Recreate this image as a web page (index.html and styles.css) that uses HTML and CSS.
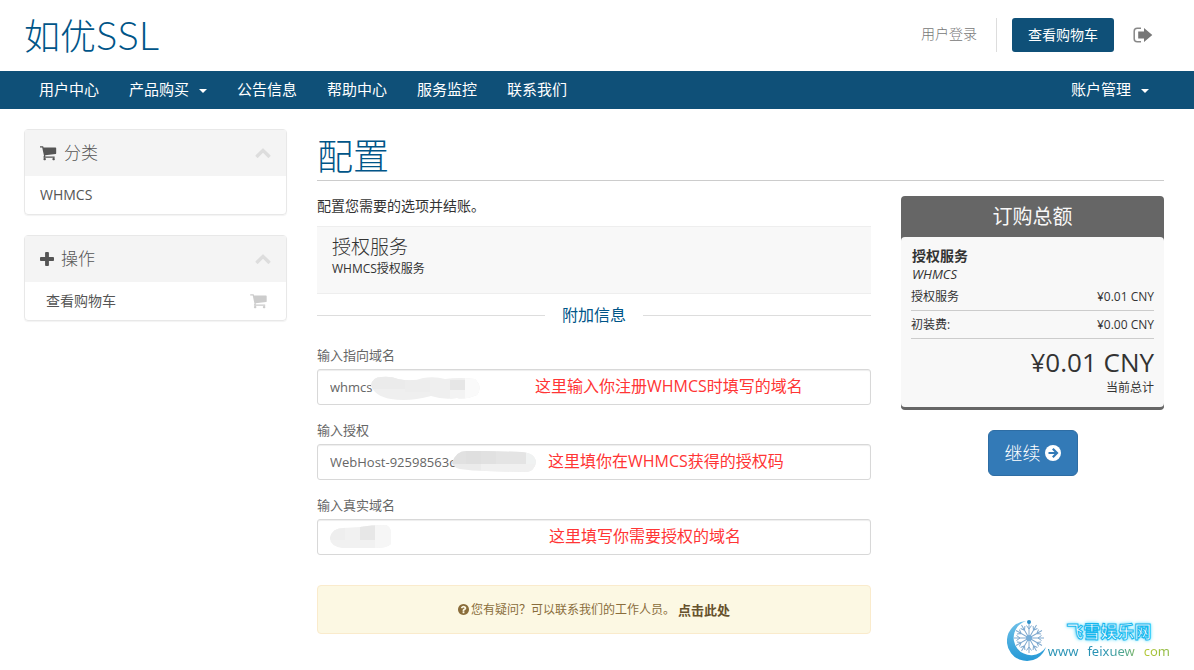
FILE: index.html
```html
<!DOCTYPE html>
<html lang="zh-CN">
<head>
<meta charset="utf-8">
<meta name="viewport" content="width=device-width, initial-scale=1">
<title>配置 - 如优SSL</title>
<link rel="stylesheet" href="styles.css">
</head>
<body>
<svg class="sprite" aria-hidden="true">
  <symbol id="cart" viewBox="64 128 1664 1600"><path d="M640 1536q0 52-38 90t-90 38-90-38-38-90 38-90 90-38 90 38 38 90zm896 0q0 52-38 90t-90 38-90-38-38-90 38-90 90-38 90 38 38 90zm128-1088v512q0 24-16.500 42.500t-40.500 21.500l-1044 122q13 60 13 70 0 16-24 64h920q26 0 45 19t19 45-19 45-45 19h-1024q-26 0-45-19t-19-45q0-11 8-31.500t16-36 21.500-40 15.500-29.500l-177-823h-204q-26 0-45-19t-19-45 19-45 45-19h256q16 0 28.500 6.500t19.500 15.500 13 24.500 8 26 5.500 29.500 4.500 26h1201q26 0 45 19t19 45z"/></symbol>
  <symbol id="plus" viewBox="192 128 1408 1408"><path d="M1600 736v192q0 40-28 68t-68 28h-416v416q0 40-28 68t-68 28h-192q-40 0-68-28t-28-68v-416h-416q-40 0-68-28t-28-68v-192q0-40 28-68t68-28h416v-416q0-40 28-68t68-28h192q40 0 68 28t28 68v416h416q40 0 68 28t28 68z"/></symbol>
  <symbol id="chevron" viewBox="64 352 1664 1280"><path d="M1683 1331l-166 165q-19 19-45 19t-45-19l-531-531-531 531q-19 19-45 19t-45-19l-166-165q-19-19-19-45.500t19-45.500l742-741q19-19 45-19t45 19l742 741q19 19 19 45.500t-19 45.500z"/></symbol>
  <symbol id="question" viewBox="128 128 1536 1536"><path d="M1024 1376v-192q0-14-9-23t-23-9h-192q-14 0-23 9t-9 23v192q0 14 9 23t23 9h192q14 0 23-9t9-23zm256-672q0-88-55.500-163t-138.500-116-170-41q-243 0-371 213-15 24 8 42l132 100q7 6 19 6 16 0 25-12 53-68 86-92 34-24 86-24 48 0 85.500 26t37.500 59q0 38-20 61t-68 45q-63 28-115.500 86.500t-52.500 125.500v36q0 14 9 23t23 9h192q14 0 23-9t9-23q0-19 21.500-49.500t54.500-49.500q32-18 49-28.500t46-35 44.500-48 28-60.500 12.500-81zm384 192q0 209-103 385.500t-279.500 279.500-385.500 103-385.500-103-279.500-279.500-103-385.500 103-385.500 279.500-279.500 385.500-103 385.500 103 279.500 279.500 103 385.500z"/></symbol>
</svg>

<header class="header container">
  <a class="logo" href="#">如优<span class="logo-latin">SSL</span></a>
  <div class="header-tools">
    <a class="login" href="#">用户登录</a>
    <a class="btn-cart" href="#">查看购物车</a>
    <button class="btn-logout" type="button" aria-label="退出">
      <svg width="20" height="16" viewBox="0 0 20 16"><path d="M8 1.200H4.200Q1.200 1.200 1.200 4.200V11.800Q1.200 14.800 4.200 14.800H8" fill="none" stroke="#888" stroke-width="1.500"/><path d="M5.200 4.500H11V1L19.300 8 11 15V11.500H5.200Z" fill="#777"/></svg>
    </button>
  </div>
</header>

<nav class="navbar">
  <div class="container nav-row">
    <ul class="nav">
      <li><a href="#">用户中心</a></li>
      <li><a href="#">产品购买<span class="caret"></span></a></li>
      <li><a href="#">公告信息</a></li>
      <li><a href="#">帮助中心</a></li>
      <li><a href="#">服务监控</a></li>
      <li><a href="#">联系我们</a></li>
    </ul>
    <ul class="nav">
      <li><a href="#">账户管理<span class="caret"></span></a></li>
    </ul>
  </div>
</nav>

<div class="container page">
  <aside class="sidebar">
    <section class="panel">
      <h3 class="panel-head"><svg class="icon" width="17" height="16"><use href="#cart"/></svg><span>分类</span><svg class="chev" width="16" height="12"><use href="#chevron"/></svg></h3>
      <a class="panel-item" href="#">WHMCS</a>
    </section>
    <section class="panel">
      <h3 class="panel-head"><svg class="icon" width="14" height="14"><use href="#plus"/></svg><span>操作</span><svg class="chev" width="16" height="12"><use href="#chevron"/></svg></h3>
      <a class="panel-item panel-item-icon" href="#"><span>查看购物车</span><svg class="item-cart" width="18" height="16"><use href="#cart"/></svg></a>
    </section>
  </aside>

  <main class="main">
    <h1 class="title">配置</h1>
    <form class="columns">
      <div class="config">
        <p class="lead">配置您需要的选项并结账。</p>
        <div class="product">
          <h2 class="product-name">授权服务</h2>
          <p class="product-desc">WHMCS授权服务</p>
        </div>
        <h2 class="divider"><span>附加信息</span></h2>

        <div class="field">
          <label for="f1">输入指向域名</label>
          <div class="control">
            <input id="f1" type="text" value="whmcs">
            <svg class="mosaic mosaic-a" width="110" height="24" viewBox="0 0 110 24">
              <defs><clipPath id="ca"><path d="M0 9Q2 1 10 1Q20 0 27 3Q42 6 52 2Q64 0 74 3Q88 1 104 3Q112 11 106 19Q94 24 86 22Q72 24 60 20Q38 26 20 23Q3 20 0 9Z"/></clipPath></defs>
              <g clip-path="url(#ca)"><rect width="110" height="24" fill="#efefef"/><rect width="34" height="13" fill="#ebebeb"/><rect x="94" width="16" height="24" fill="#fafafa"/><rect x="79" y="4" width="15" height="10" fill="#e6e6e6"/><rect x="79" y="14" width="15" height="10" fill="#f3f3f3"/><rect x="34" y="4" width="25" height="12" fill="#ededed"/></g>
            </svg>
            <span class="note note-a">这里输入你注册WHMCS时填写的域名</span>
          </div>
        </div>
        <div class="field">
          <label for="f2">输入授权</label>
          <div class="control">
            <input id="f2" type="text" value="WebHost-92598563c">
            <svg class="mosaic mosaic-b" width="84" height="22" viewBox="0 0 84 22">
              <defs><clipPath id="cb"><path d="M0 12Q4 0 14 0H34L70 1Q83 2 84 11Q83 21 72 21L34 20Q20 20 8 18Q2 17 0 12Z"/></clipPath></defs>
              <g clip-path="url(#cb)"><rect width="84" height="22" fill="#ebebeb"/><rect width="44" height="13" fill="#e1e1e1"/><rect x="14" width="15" height="13" fill="#dfdfdf"/><rect x="44" width="30" height="13" fill="#e4e4e4"/><rect x="29" y="13" width="55" height="9" fill="#f0f0f0"/><rect x="74" width="10" height="13" fill="#f0f2f2"/></g>
            </svg>
            <span class="note note-b">这里填你在WHMCS获得的授权码</span>
          </div>
        </div>
        <div class="field">
          <label for="f3">输入真实域名</label>
          <div class="control">
            <input id="f3" type="text">
            <svg class="mosaic mosaic-c" width="62" height="24" viewBox="0 0 62 24">
              <defs><clipPath id="cc"><path d="M0 13Q2 3 13 3L30 2Q40 0 56 0Q61 2 61 8V19Q57 23 46 23L12 23Q0 21 0 13Z"/></clipPath></defs>
              <g clip-path="url(#cc)"><rect width="62" height="24" fill="#f1f1f1"/><rect width="15" height="15" fill="#eee"/><rect x="30" width="15" height="15" fill="#e7e7e7"/><rect x="45" width="17" height="24" fill="#f6f6f6"/></g>
            </svg>
            <span class="note note-c">这里填写你需要授权的域名</span>
          </div>
        </div>

        <div class="alert"><svg width="11" height="11"><use href="#question"/></svg><span>您有疑问？可以联系我们的工作人员。</span><a href="#">点击此处</a></div>
      </div>

      <aside class="order">
        <section class="summary">
          <h2 class="summary-title">订购总额</h2>
          <div class="summary-body">
            <strong class="sum-name">授权服务</strong>
            <em class="sum-group">WHMCS</em>
            <div class="sum-row"><span>授权服务</span><span>¥0.01 CNY</span></div>
            <div class="sum-row"><span>初装费:</span><span>¥0.00 CNY</span></div>
            <div class="total"><span class="total-amount">¥0.01 CNY</span><span class="total-label">当前总计</span></div>
          </div>
        </section>
        <button class="btn-continue" type="submit">继续<svg width="16" height="16" viewBox="0 0 16 16"><circle cx="8" cy="8" r="8" fill="#fff"/><path d="M3.500 8H11.500M7.800 3.800L12 8 7.800 12.200" fill="none" stroke="#337ab7" stroke-width="2.200"/></svg></button>
      </aside>
    </form>
  </main>
</div>

<div class="watermark">
  <svg width="40" height="42" viewBox="0 0 40 42">
    <defs>
      <linearGradient id="moon" x1="0" y1="0" x2="0" y2="1"><stop offset="0" stop-color="#6fc0e8"/><stop offset="1" stop-color="#2599d6"/></linearGradient>
      <g id="arm" fill="none" stroke="#7fa9cf" stroke-width="1"><path d="M22 18V3M22 9L19.500 5.500M22 9L24.500 5.500"/></g>
    </defs>
    <path d="M19 1A20 20 0 1 0 39 27A17.500 17.500 0 1 1 19 1Z" fill="url(#moon)"/>
    <g><use href="#arm"/><use href="#arm" transform="rotate(30 22 18)"/><use href="#arm" transform="rotate(60 22 18)"/><use href="#arm" transform="rotate(90 22 18)"/><use href="#arm" transform="rotate(120 22 18)"/><use href="#arm" transform="rotate(150 22 18)"/><use href="#arm" transform="rotate(180 22 18)"/><use href="#arm" transform="rotate(210 22 18)"/><use href="#arm" transform="rotate(240 22 18)"/><use href="#arm" transform="rotate(270 22 18)"/><use href="#arm" transform="rotate(300 22 18)"/><use href="#arm" transform="rotate(330 22 18)"/></g>
    <circle cx="22" cy="18" r="3" fill="#75add8"/><circle cx="22" cy="2" r="2" fill="#2c8fc9"/>
  </svg>
  <div class="wm-text">
    <span class="wm-name">飞雪娱乐网</span>
    <span class="wm-url"><span>www</span><span>feixuew</span><span>com</span></span>
  </div>
</div>
</body>
</html>
```
FILE: styles.css
```css
* { box-sizing: border-box; }
body {
  position: relative;
  margin: 0;
  min-height: 100vh;
  background: #fff;
  color: #333;
  font: 14px/20px "Open Sans", "Noto Sans CJK SC", sans-serif;
}
a { color: inherit; text-decoration: none; }
h1, h2, h3, p, ul { margin: 0; padding: 0; }
svg { flex: none; fill: currentColor; }
.sprite { position: absolute; width: 0; height: 0; }
.container { padding: 0 30px 0 24px; }

.header { display: flex; justify-content: space-between; align-items: center; height: 71px; padding-bottom: 2px; }
.logo { color: #058; font: 300 36px/50px "Noto Sans CJK SC", sans-serif; }
.logo-latin { font-family: Lato, sans-serif; font-size: 40px; font-weight: 300; }
.header-tools { display: flex; align-items: center; }
.login { height: 34px; padding-right: 19px; border-right: 1px solid #ddd; color: #777; line-height: 31px; font-weight: 300; }
.btn-cart { margin-left: 15px; padding: 7px 16px; border-radius: 3px; background: #0f5078; color: #fff; }
.btn-logout { display: flex; margin: 0 11px 0 19px; padding: 0; border: 0; background: none; }

.navbar { background: #0f5078; color: #fff; }
.nav-row { display: flex; justify-content: space-between; }
.nav { display: flex; list-style: none; }
.nav a { display: flex; align-items: center; height: 38px; padding: 0 15px 2px; font-size: 15px; }
.caret { margin: 4px 0 0 10px; border: 4px solid transparent; border-top-color: #fff; border-bottom: 0; }

.page { display: grid; grid-template-columns: 263px 1fr; gap: 30px; padding-top: 20px; }
.panel { margin-bottom: 20px; border: 1px solid #e8e8e8; border-radius: 4px; box-shadow: 0 1px 1px rgba(0, 0, 0, .05); }
.panel-head { display: flex; align-items: center; height: 46px; padding: 0 15px; background: #f4f4f4; color: #555; font-size: 17px; font-weight: 300; }
.panel-head .icon { margin-right: 7px; }
.chev { margin-left: auto; color: #ddd; }
.panel-item { display: flex; align-items: center; height: 38px; padding: 0 15px 1px; color: #555; }
.panel-item-icon { justify-content: space-between; padding: 0 18px 1px 21px; }
.item-cart { color: #ccc; }

.title { padding-top: 4px; border-bottom: 1px solid #ccc; color: #058; font-size: 36px; line-height: 47px; font-weight: 300; }
.columns { display: grid; grid-template-columns: 1fr 263px; gap: 30px; padding-top: 15px; }
.lead { margin-bottom: 10px; }
.product { height: 68px; padding: 9px 15px; border: solid #eee; border-width: 1px 0; background: #f8f8f8; }
.product-name { font-size: 19px; line-height: 22px; font-weight: 300; }
.product-desc { font-size: 12px; line-height: 22px; }
.divider { display: flex; align-items: center; gap: 17px; margin: 10px 0 19px; color: #058; font-size: 16px; line-height: 22px; font-weight: 400; }
.divider::before, .divider::after { content: ""; flex: 1; border-top: 1px solid #ddd; }
.field { margin-bottom: 15px; }
.field label { display: block; margin-bottom: 4px; color: #666; font-size: 13px; line-height: 20px; }
.control { position: relative; }
.control input { display: block; width: 100%; height: 36px; padding: 0 12px 1px; border: 1px solid #d8d8d8; border-radius: 3px; background: #fff; box-shadow: inset 0 1px 1px rgba(0, 0, 0, .07); color: #666; font: inherit; font-size: 13px; }
.mosaic { position: absolute; }
.mosaic-a { left: 54px; top: 7px; }
.mosaic-b { left: 135px; top: 7px; }
.mosaic-c { left: 13px; top: 6px; }
.note { position: absolute; top: 6px; color: #ff3535; font-size: 16px; line-height: 22px; white-space: nowrap; }
.note-a { left: 218px; }
.note-b { left: 231px; }
.note-c { left: 232px; }
.alert { display: flex; align-items: center; justify-content: center; height: 49px; margin: 30px 0; border: 1px solid #faebcc; border-radius: 4px; background: #fcf8e3; color: #8a6d3b; font-size: 12px; }
.alert span { margin: 0 3px 0 2px; }
.alert a { color: #66512c; font-size: 13px; font-weight: 700; }

.order { display: flex; flex-direction: column; align-items: center; gap: 20px; }
.summary { width: 100%; border-bottom: 3px solid #666; border-radius: 4px; background: #666; font-size: 12px; }
.summary-title { color: #f8f8f8; font-size: 20px; line-height: 41px; font-weight: 400; text-align: center; }
.summary-body { padding: 10px; border-radius: 4px; background: #f8f8f8; }
.sum-name { display: block; padding-left: 1px; font-size: 14px; line-height: 18px; }
.sum-group { display: block; padding-left: 1px; font-size: 13px; line-height: 18px; }
.sum-row { display: flex; justify-content: space-between; height: 28px; border-bottom: 1px solid #ccc; line-height: 27px; }
.total { display: flex; flex-direction: column; padding-top: 6px; text-align: right; }
.total-amount { font-size: 26px; line-height: 34px; }
.total-label { line-height: 18px; }
.btn-continue { display: flex; align-items: center; gap: 4px; height: 46px; padding: 0 16px; border: 1px solid #2e6da4; border-radius: 6px; background: #337ab7; color: #fff; font: 300 18px/24px "Open Sans", "Noto Sans CJK SC", sans-serif; }

.watermark { position: absolute; right: 24px; bottom: 8px; display: flex; align-items: center; gap: 1px; }
.wm-text { display: flex; flex-direction: column; align-items: center; }
.wm-name { color: #fff; font: 700 17px/20px "Noto Sans CJK SC", sans-serif; -webkit-text-stroke: 1px #16b8ee; text-shadow: 0 0 3px #5edcff, 0 0 4px #5edcff; }
.wm-url { display: flex; gap: 9px; background: linear-gradient(90deg, #2792b4 0 45%, #57a987 65%, #b5c836 80%, #8ab844); background-clip: text; -webkit-background-clip: text; color: transparent; font: 13px/20px "Noto Sans", sans-serif; }
```
